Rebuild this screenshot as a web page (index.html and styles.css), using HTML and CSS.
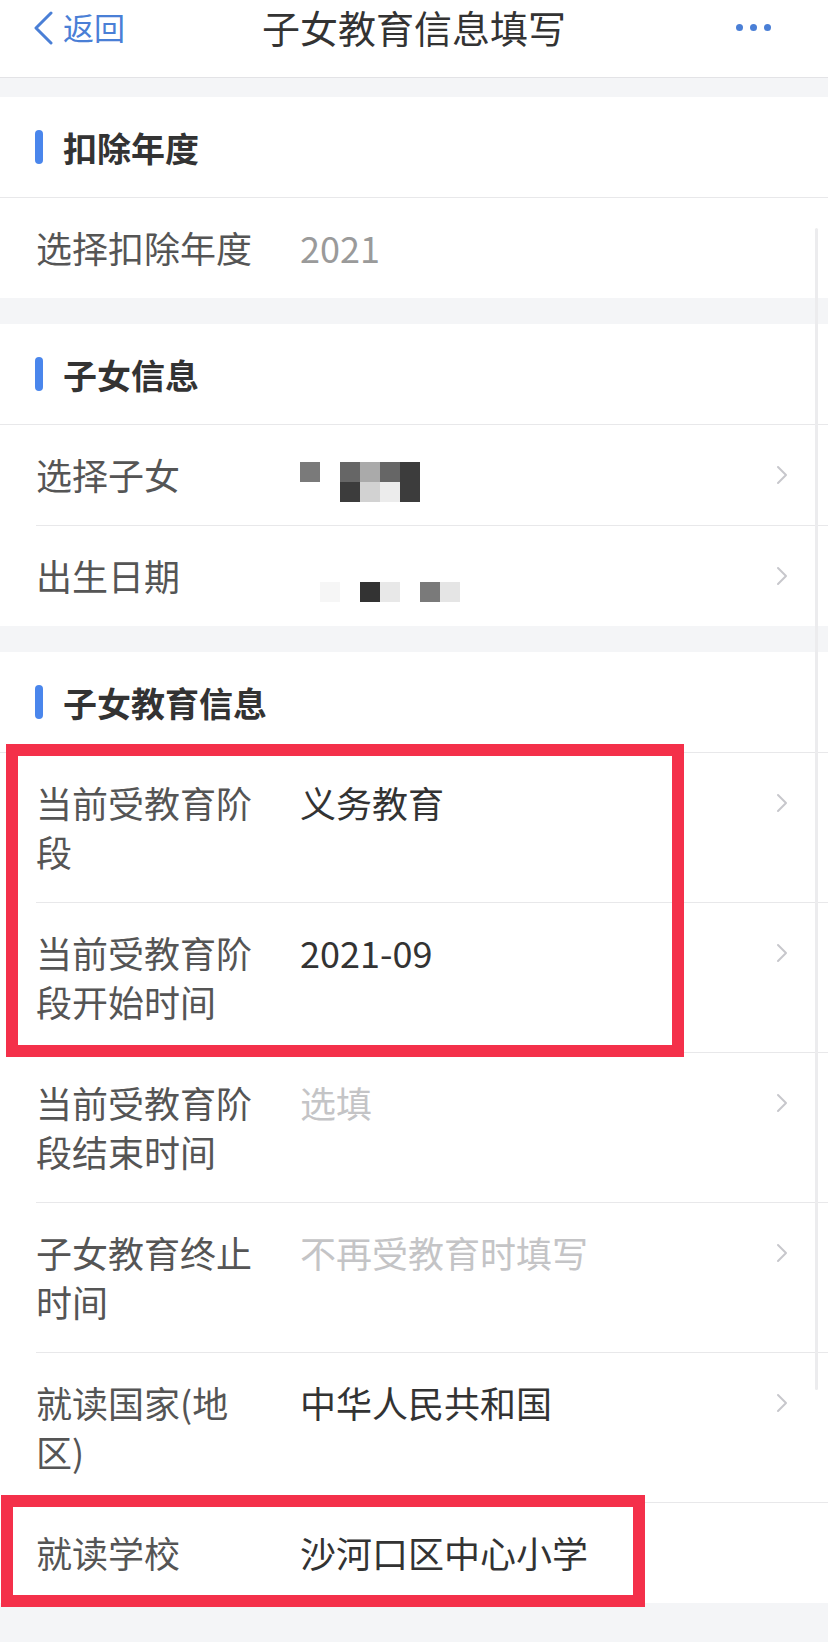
FILE: index.html
```html
<!DOCTYPE html>
<html lang="zh-CN">
<head>
<meta charset="utf-8">
<title>子女教育信息填写</title>
<link rel="stylesheet" href="styles.css">
</head>
<body>
<div class="page">
  <header class="nav">
    <div class="nav-left">
      <svg class="back-icon" width="20" height="34" viewBox="0 0 20 34"><path d="M17 2 L2 17 L17 32" fill="none" stroke="#4a7fd6" stroke-width="3" stroke-linecap="round" stroke-linejoin="round"/></svg>
      <span class="back-text">返回</span>
    </div>
    <div class="nav-title">子女教育信息填写</div>
    <div class="nav-right">
      <span class="dot"></span><span class="dot"></span><span class="dot"></span>
    </div>
  </header>

  <section class="card">
    <div class="card-head"><span class="bar"></span><span class="head-text">扣除年度</span></div>
    <div class="row">
      <div class="row-inner">
        <div class="label">选择扣除年度</div>
        <div class="value muted">2021</div>
      </div>
    </div>
  </section>

  <section class="card">
    <div class="card-head"><span class="bar"></span><span class="head-text">子女信息</span></div>
    <div class="row">
      <div class="row-inner">
        <div class="label">选择子女</div>
        <div class="value">
          <div class="mosaic m-name">
            <span class="c7a"></span><span></span><span class="c66"></span><span class="caa"></span><span class="c66"></span><span class="c3c"></span>
            <span></span><span></span><span class="c3c"></span><span class="cd0"></span><span class="cec"></span><span class="c3c"></span>
          </div>
        </div>
        <div class="arrow"><svg width="12" height="20" viewBox="0 0 12 20"><path d="M2 2 L10 10 L2 18" fill="none" stroke="#c7c7cc" stroke-width="2" stroke-linecap="round" stroke-linejoin="round"/></svg></div>
      </div>
    </div>
    <div class="row">
      <div class="row-inner">
        <div class="label">出生日期</div>
        <div class="value">
          <div class="mosaic m-date">
            <span></span><span class="cf5"></span><span></span><span class="c33"></span><span class="ce8"></span><span></span><span class="c7a"></span><span class="ce5"></span>
          </div>
        </div>
        <div class="arrow"><svg width="12" height="20" viewBox="0 0 12 20"><path d="M2 2 L10 10 L2 18" fill="none" stroke="#c7c7cc" stroke-width="2" stroke-linecap="round" stroke-linejoin="round"/></svg></div>
      </div>
    </div>
  </section>

  <section class="card">
    <div class="card-head"><span class="bar"></span><span class="head-text">子女教育信息</span></div>
    <div class="row">
      <div class="row-inner">
        <div class="label">当前受教育阶段</div>
        <div class="value dark">义务教育</div>
        <div class="arrow"><svg width="12" height="20" viewBox="0 0 12 20"><path d="M2 2 L10 10 L2 18" fill="none" stroke="#c7c7cc" stroke-width="2" stroke-linecap="round" stroke-linejoin="round"/></svg></div>
      </div>
    </div>
    <div class="row">
      <div class="row-inner">
        <div class="label">当前受教育阶段开始时间</div>
        <div class="value dark">2021-09</div>
        <div class="arrow"><svg width="12" height="20" viewBox="0 0 12 20"><path d="M2 2 L10 10 L2 18" fill="none" stroke="#c7c7cc" stroke-width="2" stroke-linecap="round" stroke-linejoin="round"/></svg></div>
      </div>
    </div>
    <div class="row">
      <div class="row-inner">
        <div class="label">当前受教育阶段结束时间</div>
        <div class="value placeholder">选填</div>
        <div class="arrow"><svg width="12" height="20" viewBox="0 0 12 20"><path d="M2 2 L10 10 L2 18" fill="none" stroke="#c7c7cc" stroke-width="2" stroke-linecap="round" stroke-linejoin="round"/></svg></div>
      </div>
    </div>
    <div class="row">
      <div class="row-inner">
        <div class="label">子女教育终止时间</div>
        <div class="value placeholder">不再受教育时填写</div>
        <div class="arrow"><svg width="12" height="20" viewBox="0 0 12 20"><path d="M2 2 L10 10 L2 18" fill="none" stroke="#c7c7cc" stroke-width="2" stroke-linecap="round" stroke-linejoin="round"/></svg></div>
      </div>
    </div>
    <div class="row">
      <div class="row-inner">
        <div class="label">就读国家(地区)</div>
        <div class="value dark">中华人民共和国</div>
        <div class="arrow"><svg width="12" height="20" viewBox="0 0 12 20"><path d="M2 2 L10 10 L2 18" fill="none" stroke="#c7c7cc" stroke-width="2" stroke-linecap="round" stroke-linejoin="round"/></svg></div>
      </div>
    </div>
    <div class="row">
      <div class="row-inner">
        <div class="label">就读学校</div>
        <div class="value dark">沙河口区中心小学</div>
      </div>
    </div>
  </section>

  <div class="scrollbar"></div>
  <div class="mark mark-1"></div>
  <div class="mark mark-2"></div>
</div>
</body>
</html>
```

FILE: styles.css
```css
html, body {
  margin: 0;
  padding: 0;
}
body {
  background: #f4f5f7;
  font-family: "Noto Sans CJK SC", "Noto Sans", sans-serif;
  color: #333;
}
.page {
  position: relative;
  width: 828px;
  min-height: 1642px;
  overflow: hidden;
}

/* nav */
.nav {
  height: 77px;
  background: #fff;
  border-bottom: 1px solid #e3e3e6;
  display: grid;
  grid-template-columns: 1fr auto 1fr;
  align-items: start;
}
.nav-left {
  display: flex;
  align-items: center;
  height: 54px;
  padding-left: 34px;
  gap: 9px;
}
.back-icon {
  display: block;
  margin-top: 1px;
}
.back-text {
  font-size: 31px;
  color: #4a7fd6;
  line-height: 54px;
}
.nav-title {
  font-size: 38px;
  line-height: 54px;
  color: #333;
}
.nav-right {
  display: flex;
  justify-content: flex-end;
  align-items: center;
  height: 54px;
  padding-right: 57px;
  gap: 7px;
}
.dot {
  width: 7px;
  height: 7px;
  border-radius: 50%;
  background: #4a7fd6;
}

/* cards */
.card {
  background: #fff;
  margin-top: 19px;
}
.card + .card {
  margin-top: 26px;
}
.card-head {
  height: 100px;
  border-bottom: 1px solid #e8e8ea;
  display: flex;
  align-items: center;
  padding-left: 35px;
}
.bar {
  width: 8px;
  height: 34px;
  border-radius: 4px;
  background: #4a86ec;
  margin-right: 20px;
}
.head-text {
  font-size: 34px;
  font-weight: bold;
  color: #333;
}

.row {
  padding-left: 36px;
}
.row-inner {
  display: flex;
  align-items: flex-start;
  padding: 25px 0 26px 0;
  border-bottom: 1px solid #e8e8ea;
}
.row:last-child .row-inner {
  border-bottom: none;
}
.label {
  width: 220px;
  flex: none;
  font-size: 36px;
  line-height: 49px;
  color: #555;
}
.value {
  flex: 1;
  margin-left: 44px;
  font-size: 36px;
  line-height: 49px;
  height: 49px;
}
.value.muted { color: #9a9a9a; }
.value.dark { color: #333; }
.value.placeholder { color: #c4c4c6; }
.arrow {
  flex: none;
  width: 12px;
  height: 49px;
  display: flex;
  align-items: center;
  margin-right: 40px;
}
.arrow svg { display: block; }

/* mosaic */
.mosaic {
  display: grid;
  grid-auto-rows: 20px;
}
.mosaic span { display: block; }
.m-name {
  grid-template-columns: repeat(6, 20px);
  margin-top: 12px;
}
.m-date {
  grid-template-columns: repeat(8, 20px);
  margin-top: 31px;
}
.c7a { background: #7a7a7a; }
.c66 { background: #666; }
.caa { background: #aaa; }
.c3c { background: #3c3c3c; }
.cd0 { background: #d2d2d2; }
.cec { background: #ececec; }
.cf5 { background: #f6f6f6; }
.c33 { background: #333; }
.ce8 { background: #e8e8e8; }
.ce5 { background: #e5e5e5; }

/* overlays */
.scrollbar {
  position: absolute;
  left: 815px;
  top: 228px;
  width: 3px;
  height: 1162px;
  border-radius: 2px;
  background: #ececee;
}
.mark {
  position: absolute;
  box-sizing: border-box;
  border: 12px solid #f4304a;
}
.mark-1 {
  left: 6px;
  top: 744px;
  width: 678px;
  height: 313px;
}
.mark-2 {
  left: 1px;
  top: 1495px;
  width: 644px;
  height: 112px;
}
```
